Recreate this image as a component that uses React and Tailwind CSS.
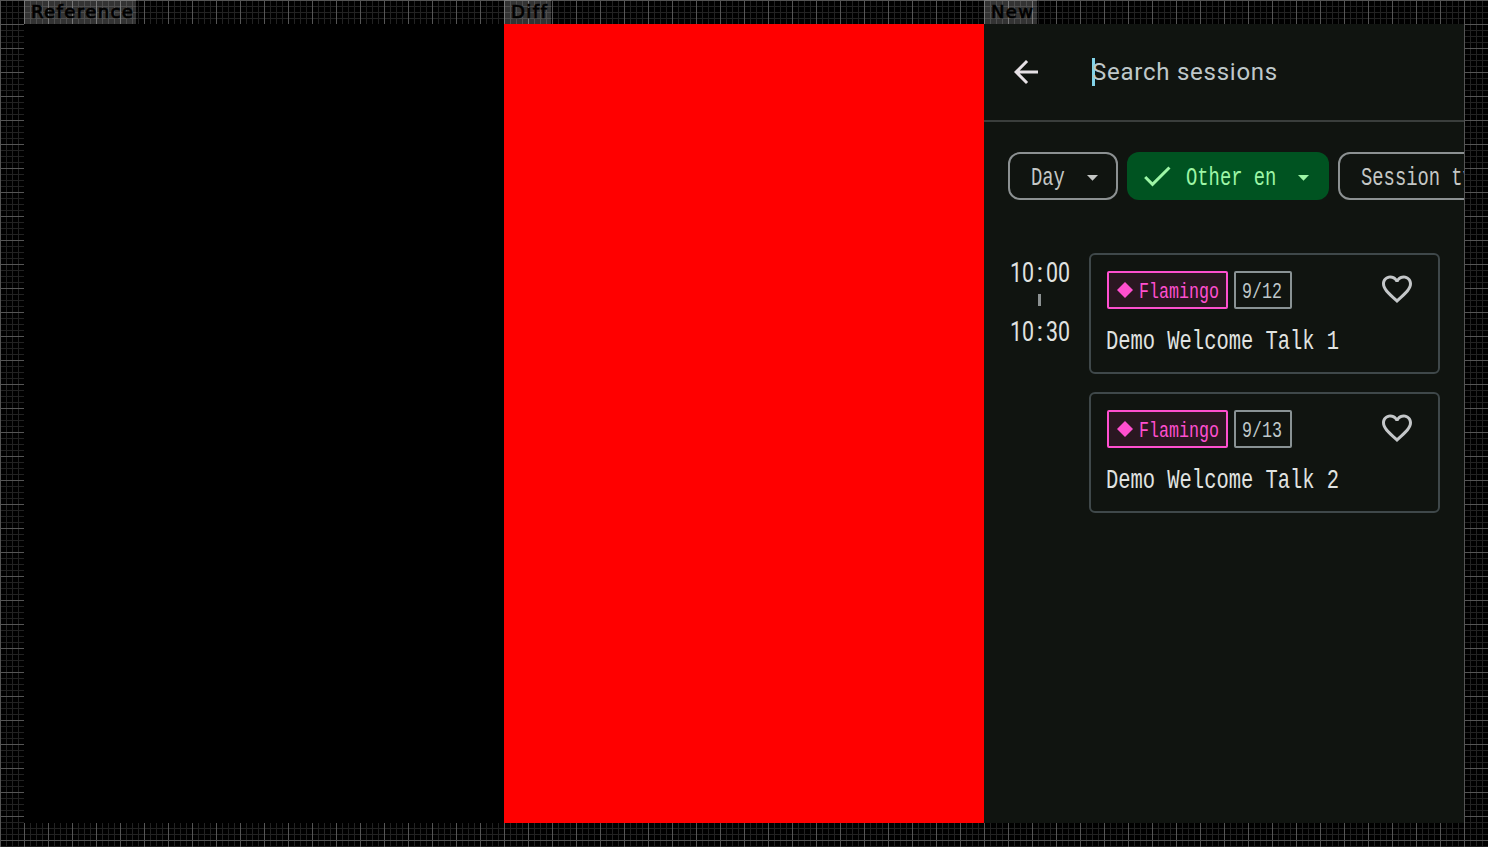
import React from "react";

const Label = ({ children, className }) => (
  <div className={`h-6 pl-[7px] bg-[#ffffff33] text-black font-['DejaVu_Sans'] text-[18px] tracking-[1.4px] leading-[23px] [-webkit-text-stroke:0.7px_black] ${className}`}>
    {children}
  </div>
);

// Condensed monospaced text, as wide as its box.
const Narrow = ({ children, className, inner }) => (
  <span className={`block whitespace-pre overflow-visible font-['Liberation_Mono',monospace] ${className}`}>
    <span className={`inline-block origin-left ${inner}`}>{children}</span>
  </span>
);

const Caret = ({ className }) => (
  <svg viewBox="0 0 11 6" className={`w-[11px] h-[6px] shrink-0 mt-[3px] ${className}`}>
    <path d="M0 0H11L5.5 5.8Z" fill="currentColor" />
  </svg>
);

const Time = ({ hour, minute }) => (
  <div className="flex h-[30px] w-[60px] font-['Roboto',sans-serif] text-[28px] leading-[30px] text-[#e0e3e1]">
    <span className="w-6"><span className="inline-block origin-left scale-x-[0.763]">{hour}</span></span>
    <span className="w-3 text-center">:</span>
    <span className="w-6"><span className="inline-block origin-left scale-x-[0.763]">{minute}</span></span>
  </div>
);

const Card = ({ date, title }) => (
  <article className="w-[351px] h-[121px] rounded-[6px] border-2 border-[#3f484a] pl-4 pt-4">
    <div className="flex h-[38px]">
      <div className="w-[121px] h-[38px] shrink-0 flex items-center rounded-[2px] border-2 border-[#ff4fcf] bg-[#2a1721] text-[#ff4fcf] pl-2">
        <svg viewBox="0 0 16 16" className="w-4 h-4 shrink-0">
          <path d="M8 0L16 8L8 16L0 8Z" fill="currentColor" />
        </svg>
        <Narrow className="w-20 ml-[6px] text-[22px] leading-[28px] pt-[6px]" inner="scale-x-[0.757]">Flamingo</Narrow>
      </div>
      <div className="ml-[6px] w-[58px] h-[38px] shrink-0 flex items-center rounded-[2px] border-2 border-[#899294] text-[#bfc8ca] pl-[6px]">
        <Narrow className="w-10 text-[22px] leading-[28px] pt-[6px]" inner="scale-x-[0.757]">{date}</Narrow>
      </div>
      <svg viewBox="0 0 24 24" className="w-9 h-9 shrink-0 ml-[87px] text-[#c4c7c9]">
        <path fill="currentColor" d="M16.5 3c-1.74 0-3.41.81-4.5 2.09C10.91 3.81 9.24 3 7.5 3 4.42 3 2 5.42 2 8.5c0 3.78 3.4 6.86 8.55 11.54L12 21.35l1.45-1.32C18.6 15.36 22 12.28 22 8.5 22 5.42 19.58 3 16.5 3zm-4.4 15.55l-.1.1-.1-.1C7.14 14.24 4 11.39 4 8.5 4 6.5 5.5 5 7.5 5c1.54 0 3.04.99 3.57 2.36h1.87C13.46 5.99 14.96 5 16.5 5c2 0 3.5 1.5 3.5 3.5 0 2.89-3.14 5.74-7.9 10.05z" />
      </svg>
    </div>
    <Narrow className="mt-4 -ml-px text-[28px] leading-[34px] text-[#e0e3e1]" inner="scale-x-[0.73]">{title}</Narrow>
  </article>
);

const GRID =
  "bg-black bg-[image:linear-gradient(to_right,#555_1px,transparent_1px),linear-gradient(to_bottom,#555_1px,transparent_1px),linear-gradient(to_right,#222_1px,transparent_1px),linear-gradient(to_bottom,#222_1px,transparent_1px)] bg-[size:24px_24px,24px_24px,6px_6px,6px_6px]";

export default function App() {
  return (
    <div className={`w-[1488px] h-[847px] overflow-hidden px-6 flex ${GRID}`}>
      <section className="w-[480px]">
        <Label className="w-[112px]">Reference</Label>
        <div className="h-[799px] bg-black" />
      </section>
      <section className="w-[480px]">
        <Label className="w-[47px]">Diff</Label>
        <div className="h-[799px] bg-[#ff0000]" />
      </section>
      <section className="w-[480px]">
        <Label className="w-[53px]">New</Label>
        <div className="h-[799px] bg-[#101410] overflow-hidden">
          <header className="h-[98px] border-b-2 border-[#3a3e3c] flex items-center pl-6">
            <svg viewBox="0 0 24 24" className="w-9 h-9 text-[#e6e1e5]">
              <path fill="currentColor" d="M20 11H7.83l5.59-5.59L12 4l-8 8 8 8 1.41-1.41L7.83 13H20v-2z" />
            </svg>
            <div className="ml-12 w-[3px] h-7 bg-[#82d3e8]" />
            <div className="-ml-[3px] font-['Roboto',sans-serif] text-[24px] leading-8 tracking-[0.75px] text-[#bfc8ca]">Search sessions</div>
          </header>
          <div className="flex gap-[9px] pl-6 mt-[30px] text-[#c4c7c5]">
            <div className="w-[110px] h-12 shrink-0 rounded-[12px] border-2 border-[#8c9192] flex items-center pl-[21px]">
              <Narrow className="w-[34px] text-[25px] leading-8 pt-[5px]" inner="scale-x-[0.753]">Day</Narrow>
              <Caret className="ml-[22px]" />
            </div>
            <div className="w-[202px] h-12 shrink-0 rounded-[12px] bg-[#005321] text-[#9df6a6] flex items-center pl-3">
              <svg viewBox="0 0 24 24" className="w-9 h-9 shrink-0">
                <path fill="currentColor" d="M9 16.17L4.83 12l-1.42 1.41L9 19 21 7l-1.41-1.41z" />
              </svg>
              <Narrow className="w-[90px] ml-[11px] text-[25px] leading-8 pt-[5px]" inner="scale-x-[0.753]">Other en</Narrow>
              <Caret className="ml-[22px]" />
            </div>
            <div className="w-[210px] h-12 shrink-0 rounded-[12px] border-2 border-[#8c9192] flex items-center pl-[21px]">
              <Narrow className="w-[136px] text-[25px] leading-8 pt-[5px]" inner="scale-x-[0.753]">Session type</Narrow>
            </div>
          </div>
          <main className="flex mt-[53px] pl-[26px]">
            <div className="w-[79px] pt-[5px]">
              <Time hour="10" minute="00" />
              <div className="ml-[28px] mt-[6px] mb-[11px] w-[3px] h-3 bg-[#8c9192]" />
              <Time hour="10" minute="30" />
            </div>
            <div className="flex flex-col gap-[18px]">
              <Card date="9/12" title="Demo Welcome Talk 1" />
              <Card date="9/13" title="Demo Welcome Talk 2" />
            </div>
          </main>
        </div>
      </section>
    </div>
  );
}
